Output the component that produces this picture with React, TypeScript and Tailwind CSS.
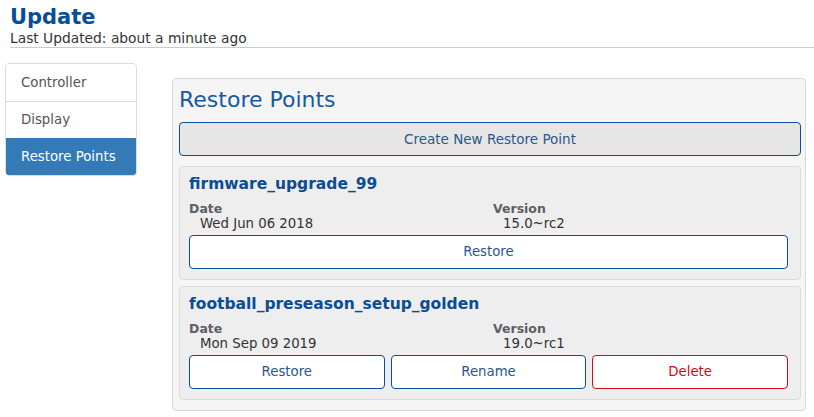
import React from 'react';

const font = { fontFamily: '"DejaVu Sans", sans-serif' };

type Point = {
    name: string;
    date: string;
    version: string;
    actions: ('restore' | 'rename' | 'delete')[];
};

const points: Point[] = [
    { name: 'firmware_upgrade_99', date: 'Wed Jun 06 2018', version: '15.0~rc2', actions: ['restore'] },
    { name: 'football_preseason_setup_golden', date: 'Mon Sep 09 2019', version: '19.0~rc1', actions: ['restore', 'rename', 'delete'] },
];

function ActionButton({ kind }: { kind: 'restore' | 'rename' | 'delete' }) {
    if (kind === 'delete') {
        return (
            <button className="flex-1 h-[34px] rounded-[4px] border border-[#d7081c] bg-white text-[13.3px] text-[#d7081c]">
                Delete
            </button>
        );
    }
    return (
        <button className="flex-1 h-[34px] rounded-[4px] border border-[#0b4f98] bg-white text-[13.3px] text-[#2b5690]">
            {kind === 'restore' ? 'Restore' : 'Rename'}
        </button>
    );
}

function PointCard({ point }: { point: Point }) {
    return (
        <div className="rounded-[4px] border border-[#dcdcdc] bg-[#eeeeee] pl-[9px] pr-[12px] pt-[6px] pb-[10px]">
            <h3 className="text-[15.5px] font-bold leading-[22px] text-[#0a4d97]">{point.name}</h3>
            <div className="grid grid-cols-[304px_1fr] mt-[6px]">
                <div>
                    <div className="text-[12.5px] font-bold leading-[15px] text-[#5e5e66]">Date</div>
                    <div className="pl-[11px] text-[13.3px] leading-[15px] text-[#333]">{point.date}</div>
                </div>
                <div>
                    <div className="text-[12.5px] font-bold leading-[15px] text-[#5e5e66]">Version</div>
                    <div className="pl-[10px] text-[13.3px] leading-[15px] text-[#333]">{point.version}</div>
                </div>
            </div>
            <div className="flex gap-[6px] mt-[4px]">
                {point.actions.map((a) => (
                    <ActionButton key={a} kind={a} />
                ))}
            </div>
        </div>
    );
}

export default function App() {
    const menu = ['Controller', 'Display', 'Restore Points'];
    return (
        <div className="min-h-[417px] bg-white text-[#333]" style={font}>
            {/* Header */}
            <div className="pl-[10px] pt-[5px]">
                <h1 className="text-[21px] font-bold leading-[25px] text-[#0a4d97]">Update</h1>
                <div className="text-[13.8px] leading-[17px] text-[#333]">Last Updated: about a minute ago</div>
                <div className="h-px bg-[#cccccc]" />
            </div>

            <div className="flex items-start">
                {/* Sidebar */}
                <div className="ml-[5px] mt-[15px] w-[132px] rounded-[4px] border border-[#dddddd] overflow-hidden">
                    {menu.map((m, i) => (
                        <div
                            key={m}
                            className={
                                m === 'Restore Points'
                                    ? 'h-[37px] pl-[15px] flex items-center bg-[#337ab7] text-white text-[13.3px]'
                                    : 'h-[37px] pl-[15px] flex items-center bg-white text-[#555] text-[13.3px]' + (i > 0 ? ' border-t border-[#dddddd]' : '')
                            }
                        >
                            {m}
                        </div>
                    ))}
                </div>

                {/* Main panel */}
                <div className="ml-[35px] mt-[30px] w-[634px] rounded-[4px] border border-[#d9d9d9] bg-[#f5f5f5] pl-[6px] pr-[4px] pt-[6px] pb-[10px]">
                    <h2 className="text-[22px] leading-[30px] text-[#1559a3]">Restore Points</h2>
                    <button className="mt-[7px] w-full h-[34px] rounded-[4px] border border-[#0b4f98] bg-[#e6e6e6] text-[13.5px] text-[#2b5690]">
                        Create New Restore Point
                    </button>
                    <div className="mt-[10px] flex flex-col gap-[6px]">
                        {points.map((p) => (
                            <PointCard key={p.name} point={p} />
                        ))}
                    </div>
                </div>
            </div>
        </div>
    );
}
